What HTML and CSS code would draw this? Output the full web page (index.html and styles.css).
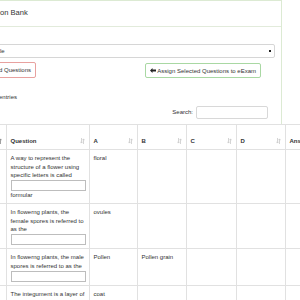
FILE: index.html
```html
<!DOCTYPE html>
<html lang="en">
<head>
<meta charset="utf-8">
<title>Question Bank</title>
<link rel="stylesheet" href="styles.css">
</head>
<body>
<div class="viewport">
  <div class="page">
    <div class="panel">
      <div class="panel-heading"><h3>Question Bank</h3></div>
      <div class="panel-body">
        <div class="select-wrap">
          <select class="form-select"><option>Select eExam Title</option></select>
        </div>
        <div class="actions">
          <button class="btn btn-danger">Delete Selected Questions</button>
          <button class="btn btn-success"><svg class="arrow" width="6" height="5" viewBox="0 0 12 10"><path d="M0 5L5 0v3h7v4H5v3z" fill="#222"/></svg>Assign Selected Questions to eExam</button>
        </div>
        <div class="dt-length">Show 10 entries</div>
        <div class="dt-search">
          <label for="q">Search:</label>
          <input id="q" class="search-input" type="search">
        </div>
      </div>
    </div>
    <table class="grid">
      <colgroup>
        <col class="c0"><col class="cq"><col class="ca"><col class="cb"><col class="cc"><col class="cd"><col class="cans">
      </colgroup>
      <thead>
        <tr>
          <th><div class="th-in"><span>#</span><svg class="sort sort-active" width="5" height="6" viewBox="0 0 10 12"><path d="M3 0v10M0.6 7.4L3 10.2 5.4 7.4M7 12V2M4.6 4.6L7 1.8 9.4 4.6"/></svg></div></th>
          <th><div class="th-in"><span>Question</span><svg class="sort" width="5" height="6" viewBox="0 0 10 12"><path d="M3 0v10M0.6 7.4L3 10.2 5.4 7.4M7 12V2M4.6 4.6L7 1.8 9.4 4.6"/></svg></div></th>
          <th><div class="th-in"><span>A</span><svg class="sort" width="5" height="6" viewBox="0 0 10 12"><path d="M3 0v10M0.6 7.4L3 10.2 5.4 7.4M7 12V2M4.6 4.6L7 1.8 9.4 4.6"/></svg></div></th>
          <th><div class="th-in"><span>B</span><svg class="sort" width="5" height="6" viewBox="0 0 10 12"><path d="M3 0v10M0.6 7.4L3 10.2 5.4 7.4M7 12V2M4.6 4.6L7 1.8 9.4 4.6"/></svg></div></th>
          <th><div class="th-in"><span>C</span><svg class="sort" width="5" height="6" viewBox="0 0 10 12"><path d="M3 0v10M0.6 7.4L3 10.2 5.4 7.4M7 12V2M4.6 4.6L7 1.8 9.4 4.6"/></svg></div></th>
          <th><div class="th-in"><span>D</span><svg class="sort" width="5" height="6" viewBox="0 0 10 12"><path d="M3 0v10M0.6 7.4L3 10.2 5.4 7.4M7 12V2M4.6 4.6L7 1.8 9.4 4.6"/></svg></div></th>
          <th><div class="th-in"><span>Answer</span></div></th>
        </tr>
      </thead>
      <tbody>
        <tr>
          <td>1</td>
          <td>A way to represent the structure of a flower using specific letters is called<input class="blank" type="text"><div>formular</div></td>
          <td>floral</td><td></td><td></td><td></td><td></td>
        </tr>
        <tr>
          <td>2</td>
          <td>In flowerng plants, the female spores is referred to as the<input class="blank" type="text"></td>
          <td>ovules</td><td></td><td></td><td></td><td></td>
        </tr>
        <tr>
          <td>3</td>
          <td>In flowerng plants, the male spores is referred to as the<input class="blank" type="text"></td>
          <td>Pollen</td><td>Pollen grain</td><td></td><td></td><td></td>
        </tr>
        <tr>
          <td>4</td>
          <td>The integument is a layer of tissue that surrounds the ovule and later forms the seed</td>
          <td>coat</td><td></td><td></td><td></td><td></td>
        </tr>
      </tbody>
    </table>
  </div>
</div>
</body>
</html>
```
FILE: styles.css
```css
* { box-sizing: border-box; }
html, body { margin: 0; padding: 0; background: #fff; }
body {
  font-family: "Liberation Sans", Arial, sans-serif;
  font-size: 6px;
  line-height: 8.6px;
  color: #333;
}
.viewport { width: 300px; height: 300px; overflow: hidden; }
.page { margin-left: -60px; width: 520px; }

.panel {
  width: 342px;
  border: 1px solid #dcead3;
  border-bottom: none;
}
.panel-heading {
  height: 26px;
  border-bottom: 1px solid #e2ebdb;
  padding-left: 37px;
  display: flex;
  align-items: center;
}
.panel-heading h3 { margin: 0; font-size: 7.6px; font-weight: normal; color: #333; }
.panel-body { padding: 17px 6px 5px 11px; }

.select-wrap {
  position: relative;
  height: 14px;
  border: 1px solid #d6d6d6;
  border-radius: 2px;
}
.form-select {
  appearance: none;
  -webkit-appearance: none;
  border: none;
  background: transparent;
  width: 100%;
  height: 12px;
  padding: 0 0 0 2px;
  font: inherit;
  font-size: 6px;
  color: #333;
  outline: none;
}
.select-wrap::after {
  content: "";
  position: absolute;
  right: 3px;
  top: 5px;
  width: 2px;
  height: 2px;
  background: #222;
}

.actions {
  margin-top: 4px;
  display: flex;
  justify-content: space-between;
  align-items: flex-end;
  padding-right: 14px;
}
.btn {
  font: inherit;
  font-size: 6px;
  color: #333;
  background: #fff;
  border-radius: 2px;
  padding: 0 4px;
  height: 16px;
  line-height: 14px;
  display: flex;
  align-items: center;
  cursor: pointer;
}
.btn-danger { border: 1px solid #e8a19f; margin-left: 3px; }
.btn-success { border: 1px solid #a9d8a3; height: 15px; }
.arrow { margin-right: 1px; flex: none; }

.dt-length { margin-top: 14.7px; padding-left: 22px; }
.dt-search {
  margin-top: 4.7px;
  display: flex;
  justify-content: flex-end;
  align-items: center;
  padding-right: 7px;
}
.search-input {
  margin-left: 3px;
  width: 72px;
  height: 13px;
  border: 1px solid #d8d8d8;
  border-radius: 2px;
  padding: 0 3px;
  font: inherit;
}

.grid {
  margin-left: 37px;
  table-layout: fixed;
  border-collapse: separate;
  border-spacing: 0;
  border-top: 1px solid #e1e1e1;
  border-left: 1px solid #e1e1e1;
  width: 339px;
}
.c0 { width: 29px; }
.cq { width: 83px; }
.ca { width: 48px; }
.cb { width: 49px; }
.cc { width: 50px; }
.cd { width: 49px; }
.cans { width: 31px; }

.grid th, .grid td {
  border-right: 1px solid #e1e1e1;
  border-bottom: 1px solid #e1e1e1;
  text-align: left;
  padding: 4px 3px 3.6px 3.5px;
}
.grid th {
  height: 25px;
  vertical-align: bottom;
  padding-bottom: 3.7px;
  font-weight: bold;
  white-space: nowrap;
  overflow: hidden;
}
.grid td { vertical-align: top; }
.th-in {
  display: flex;
  justify-content: space-between;
  align-items: center;
  padding-right: 1px;
}
.sort { flex: none; }
.sort path { stroke: #cacaca; stroke-width: 1.6; fill: none; }
.sort-active path { stroke: #8a8a8a; }
.blank {
  display: block;
  width: 100%;
  height: 11px;
  border: 1px solid #bdbdbd;
  padding: 0;
  margin: 0;
  font: inherit;
}
```
